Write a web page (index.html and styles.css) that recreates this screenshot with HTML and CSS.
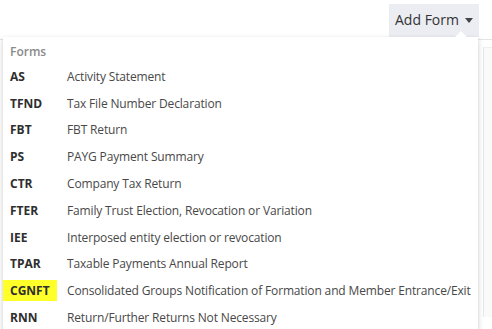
FILE: index.html
```html
<!DOCTYPE html>
<html>
<head>
	<title>Add Form</title>
	<link rel="stylesheet" href="styles.css">
</head>
<body>
	<div class="toolbar">
		<div class="addbtn">Add Form <span class="caret"></span></div>
	</div>
	<div class="page">
		<div class="card"></div>
		<div class="menu">
			<div class="menuhead">Forms</div>
			<div class="item"><span class="code">AS</span><span class="name">Activity Statement</span></div>
			<div class="item"><span class="code">TFND</span><span class="name">Tax File Number Declaration</span></div>
			<div class="item"><span class="code">FBT</span><span class="name">FBT Return</span></div>
			<div class="item"><span class="code">PS</span><span class="name">PAYG Payment Summary</span></div>
			<div class="item"><span class="code">CTR</span><span class="name">Company Tax Return</span></div>
			<div class="item"><span class="code">FTER</span><span class="name">Family Trust Election, Revocation or Variation</span></div>
			<div class="item"><span class="code">IEE</span><span class="name">Interposed entity election or revocation</span></div>
			<div class="item"><span class="code">TPAR</span><span class="name">Taxable Payments Annual Report</span></div>
			<div class="item"><span class="code mark">CGNFT</span><span class="name">Consolidated Groups Notification of Formation and Member Entrance/Exit</span></div>
			<div class="item"><span class="code">RNN</span><span class="name">Return/Further Returns Not Necessary</span></div>
		</div>
	</div>
</body>
</html>
```
FILE: styles.css
```css
*{
	box-sizing:border-box;
}

body{
	margin:0;
	background:#fff;
	font-family:"Open Sans","Noto Sans",sans-serif;
	overflow:hidden;
	height:329px;
}

.toolbar{
	display:flex;
	justify-content:flex-end;
	padding:4px 13px 0 0;
	height:37px;
}

.addbtn{
	width:90px;
	height:33px;
	background:#ececf3;
	color:#333;
	font-size:14px;
	display:flex;
	align-items:center;
	justify-content:center;
	gap:6px;
	padding:0 0 2px 0;
}

.caret{
	width:0;
	height:0;
	border-left:4px solid transparent;
	border-right:4px solid transparent;
	border-top:5px solid #444;
	margin-top:2px;
}

.page{
	position:relative;
	margin-top:2px;
	border-top:1px solid #e4e4e4;
	height:300px;
}

.card{
	margin:7px 0 0 483px;
	height:270px;
	border-left:1px solid #e8e8e8;
	border-top:1px solid #efefef;
	background:#fafafa;
}

.menu{
	position:absolute;
	left:3px;
	top:-3px;
	width:475px;
	background:#fff;
	box-shadow:0 2px 5px rgba(0,0,0,0.22);
	padding:4px 0 0 0;
}

.menu:before{
	content:"";
	position:absolute;
	top:-6px;
	right:11px;
	border-left:6px solid transparent;
	border-right:6px solid transparent;
	border-bottom:6px solid #fff;
}

.menuhead{
	height:22px;
	line-height:22px;
	padding-left:7px;
	font-size:12px;
	font-weight:600;
	color:#8a8a8a;
}

.item{
	display:flex;
	align-items:center;
	height:26.8px;
	font-size:12px;
	white-space:nowrap;
}

.code{
	width:64px;
	padding-left:7px;
	font-weight:700;
	color:#2e2e2e;
	align-self:stretch;
	display:flex;
	align-items:center;
}

.mark{
	background:#ffff2a;
	width:54px;
	margin-right:10px;
	margin-top:3px;
	margin-bottom:3px;
}

.name{
	color:#484848;
	letter-spacing:-0.15px;
}
```
